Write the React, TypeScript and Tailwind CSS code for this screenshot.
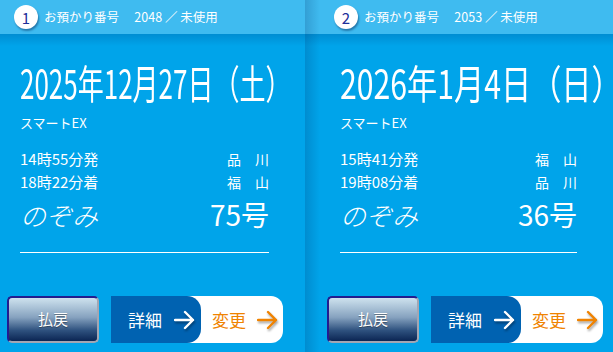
import React from 'react';

interface Ticket {
  no: number;
  code: string;
  date: string;
  dateScale: string;
  depTime: string;
  depSta: string;
  arrTime: string;
  arrSta: string;
  train: string;
  num: string;
}

const tickets: Ticket[] = [
  {
    no: 1,
    code: '2048',
    date: '2025年12月27日（土）',
    dateScale: 'scale-x-[0.65]',
    depTime: '14時55分発',
    depSta: '品　川',
    arrTime: '18時22分着',
    arrSta: '福　山',
    train: 'のぞみ',
    num: '75号',
  },
  {
    no: 2,
    code: '2053',
    date: '2026年1月4日（日）',
    dateScale: 'scale-x-[0.755]',
    depTime: '15時41分発',
    depSta: '福　山',
    arrTime: '19時08分着',
    arrSta: '品　川',
    train: 'のぞみ',
    num: '36号',
  },
];

const Arrow: React.FC<{ color: string }> = ({ color }) => (
  <svg
    width="22"
    height="20"
    viewBox="0 0 22 20"
    className="drop-shadow-[1px_2px_1px_rgba(0,0,0,0.35)]"
  >
    <path
      d="M1 10 H19 M11 2 L19 10 L11 18"
      fill="none"
      stroke={color}
      strokeWidth="2.4"
      strokeLinecap="round"
      strokeLinejoin="round"
    />
  </svg>
);

const TicketCard: React.FC<{ t: Ticket; shadow?: boolean }> = ({ t, shadow }) => {
  return (
    <div className={`relative flex flex-col h-[352px] ${shadow ? 'w-[308px] pl-[15px]' : 'w-[305px]'}`}>
      {/* header */}
      <div className={`flex items-center h-[34px] bg-[#3fbbf0] ${shadow ? '-ml-[15px] pl-[29px]' : 'pl-[14px]'}`}>
        <div className="flex items-center justify-center w-6 h-6 rounded-full bg-white shadow-[1px_2px_2px_rgba(0,40,90,0.45)] text-[15px] text-[#1c2e99] leading-none">
          {t.no}
        </div>
        <div className="ml-[6px] text-[12.5px] text-white whitespace-nowrap">
          お預かり番号　 {t.code} ／ 未使用
        </div>
      </div>

      {/* body */}
      <div className={`flex-1 flex flex-col bg-[linear-gradient(to_bottom,#008dd2_0px,#00a4ea_12px)] ${shadow ? '-ml-[15px] pl-[15px]' : ''}`}>
        <div className="flex flex-col pl-[20px] pr-[36px] text-white">
          <div className="mt-[28px] h-[40px] w-[260px] overflow-visible">
            <div className={`w-max text-[40px] leading-none whitespace-nowrap origin-left ${t.dateScale}`}>
              {t.date}
            </div>
          </div>
          <div className="mt-[14px] text-[13px] leading-none">スマートEX</div>

          <div className="mt-[23px] flex justify-between items-end h-[14px] leading-none">
            <span className="text-[15px]">{t.depTime}</span>
            <span className="text-[14px]">{t.depSta}</span>
          </div>
          <div className="mt-[9px] flex justify-between items-end h-[14px] leading-none">
            <span className="text-[15px]">{t.arrTime}</span>
            <span className="text-[14px]">{t.arrSta}</span>
          </div>

          <div className="mt-[11px] flex justify-between items-end h-[28px] leading-none">
            <span className="text-[26px] italic font-light">{t.train}</span>
            <span className="text-[28px]">{t.num}</span>
          </div>

          <div className="mt-[24px] h-px bg-white" />
        </div>

        {/* buttons */}
        <div className="mt-[43px] flex pl-[7px] gap-[12px]">
          <div className="flex items-center justify-center w-[92px] h-[47px] rounded-[5px] border-2 border-t-[#231c8e] border-l-[#231c8e] border-r-[#a3a6b3] border-b-[#a3a6b3] bg-[linear-gradient(to_bottom,#cee2ee_0%,#86a2bf_45%,#2f527f_75%,#0b2553_100%)] text-white text-[15px] [text-shadow:0_1px_1px_rgba(0,0,0,0.4)]">
            払戻
          </div>
          <div className="flex w-[172px] h-[47px] bg-white rounded-r-[12px]">
            <div className="flex items-center w-[90px] h-full bg-[#0062b1] rounded-r-[14px] pl-[17px] gap-[12px] text-white text-[17px]">
              <span>詳細</span>
              <Arrow color="#ffffff" />
            </div>
            <div className="flex items-center pl-[11px] gap-[11px] text-[#f08300] text-[17px]">
              <span>変更</span>
              <Arrow color="#f08300" />
            </div>
          </div>
        </div>
      </div>

      {shadow && (
        <div className="absolute inset-y-0 left-0 w-[15px] bg-[linear-gradient(to_right,rgba(0,45,100,0.2),rgba(0,45,100,0))]" />
      )}
    </div>
  );
};

export default function App() {
  return (
    <div className="flex w-[613px] h-[352px] overflow-hidden bg-[#00a4ea] font-['Noto_Sans_CJK_JP','Noto_Sans',sans-serif]">
      <TicketCard t={tickets[0]} />
      <TicketCard t={tickets[1]} shadow />
    </div>
  );
}
